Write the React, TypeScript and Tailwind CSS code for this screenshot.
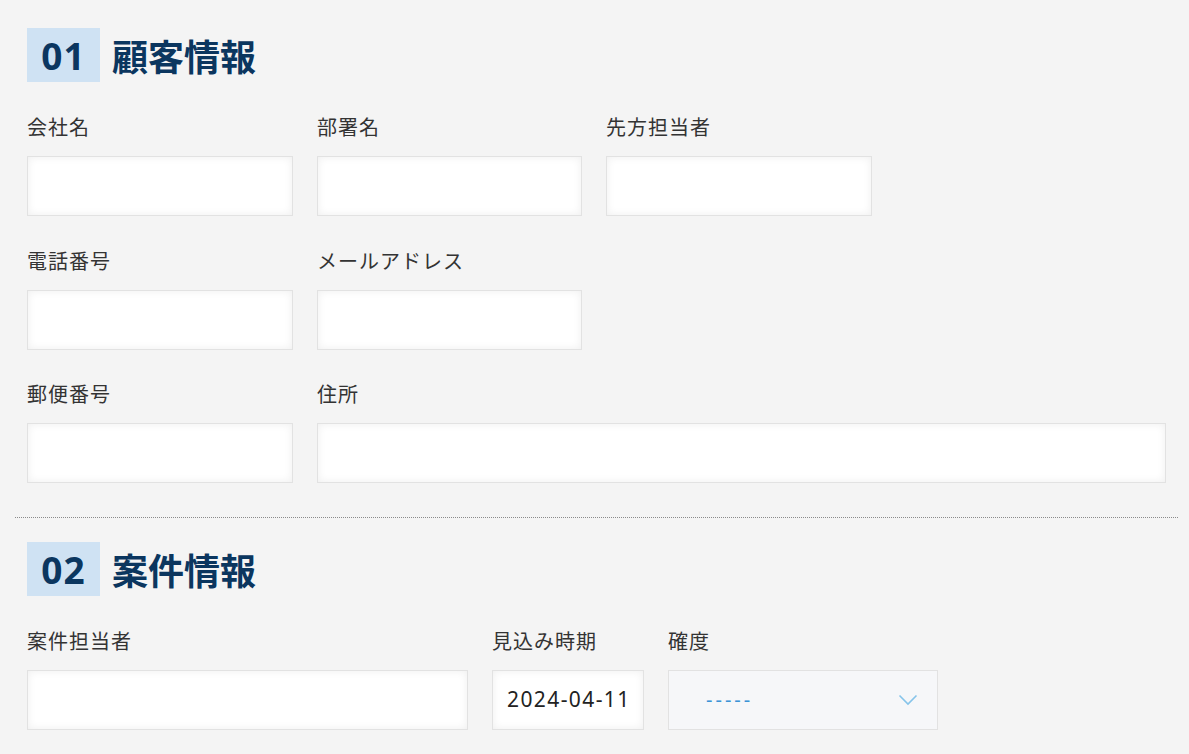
import React from 'react';

const FONT = { fontFamily: '"Noto Sans CJK JP", "Noto Sans", sans-serif' };

function SectionHeader({ num, title }: { num: string; title: string }) {
  return (
    <div className="flex items-center gap-3">
      <div
        className="flex h-[54px] w-[73px] items-center justify-center bg-[#cfe2f3] text-[37px] font-bold leading-none tracking-[1px] text-[#0b365f]"
        style={{ fontFamily: '"Noto Sans", sans-serif' }}
      >
        {num}
      </div>
      <h2 className="text-[36px] font-bold leading-none text-[#0b365f]">{title}</h2>
    </div>
  );
}

function Field({ label, width, children }: { label: string; width: string; children?: React.ReactNode }) {
  return (
    <div className={`flex flex-col ${width}`}>
      <label className="h-[27px] text-[20px] leading-[27px] tracking-[1px] text-[#333]">{label}</label>
      <div className="mt-[16px] h-[60px] w-full border border-[#e2e2e2] bg-white shadow-[inset_0_0_8px_rgba(0,0,0,0.07)]">
        {children}
      </div>
    </div>
  );
}

export default function App() {
  return (
    <div className="min-h-screen bg-[#f4f4f4] pl-[15px] pr-[11px] pt-[28px]" style={FONT}>
      {/* 01 customer */}
      <section className="px-3 pb-[34px]">
        <SectionHeader num="01" title="顧客情報" />
        <div className="mt-[31px] flex flex-col gap-[30.5px]">
          <div className="flex gap-[24px]">
            <Field label="会社名" width="w-[266px]" />
            <Field label="部署名" width="w-[265px]" />
            <Field label="先方担当者" width="w-[266px]" />
          </div>
          <div className="flex gap-[24px]">
            <Field label="電話番号" width="w-[266px]" />
            <Field label="メールアドレス" width="w-[265px]" />
          </div>
          <div className="flex gap-[24px]">
            <Field label="郵便番号" width="w-[266px]" />
            <Field label="住所" width="flex-1" />
          </div>
        </div>
      </section>

      <div className="border-t border-dotted border-[#8a8a8a]" />

      {/* 02 deal */}
      <section className="px-3 pt-[24px]">
        <SectionHeader num="02" title="案件情報" />
        <div className="mt-[31px] flex gap-[24px]">
          <Field label="案件担当者" width="w-[441px]" />
          <Field label="見込み時期" width="w-[152px]">
            <div
              className="flex h-full items-center pl-[14px] text-[21px] tracking-[1.4px] text-[#222]"
              style={{ fontFamily: '"Noto Sans", sans-serif' }}
            >
              2024-04-11
            </div>
          </Field>
          <div className="flex w-[270px] flex-col">
            <label className="h-[27px] text-[20px] leading-[27px] tracking-[1px] text-[#333]">確度</label>
            <div className="mt-[16px] flex h-[60px] w-full items-center justify-between border border-[#e2e2e2] bg-[#f6f7f9] pl-[37px] pr-[19px]">
              <span className="text-[20px] tracking-[3px] text-[#3b94d6]" style={{ fontFamily: '"Noto Sans", sans-serif' }}>
                -----
              </span>
              <svg width="20" height="12" viewBox="0 0 20 12" fill="none">
                <path d="M1.5 1.5 L10 10 L18.5 1.5" stroke="#86c4ea" strokeWidth="1.6" />
              </svg>
            </div>
          </div>
        </div>
      </section>
    </div>
  );
}
